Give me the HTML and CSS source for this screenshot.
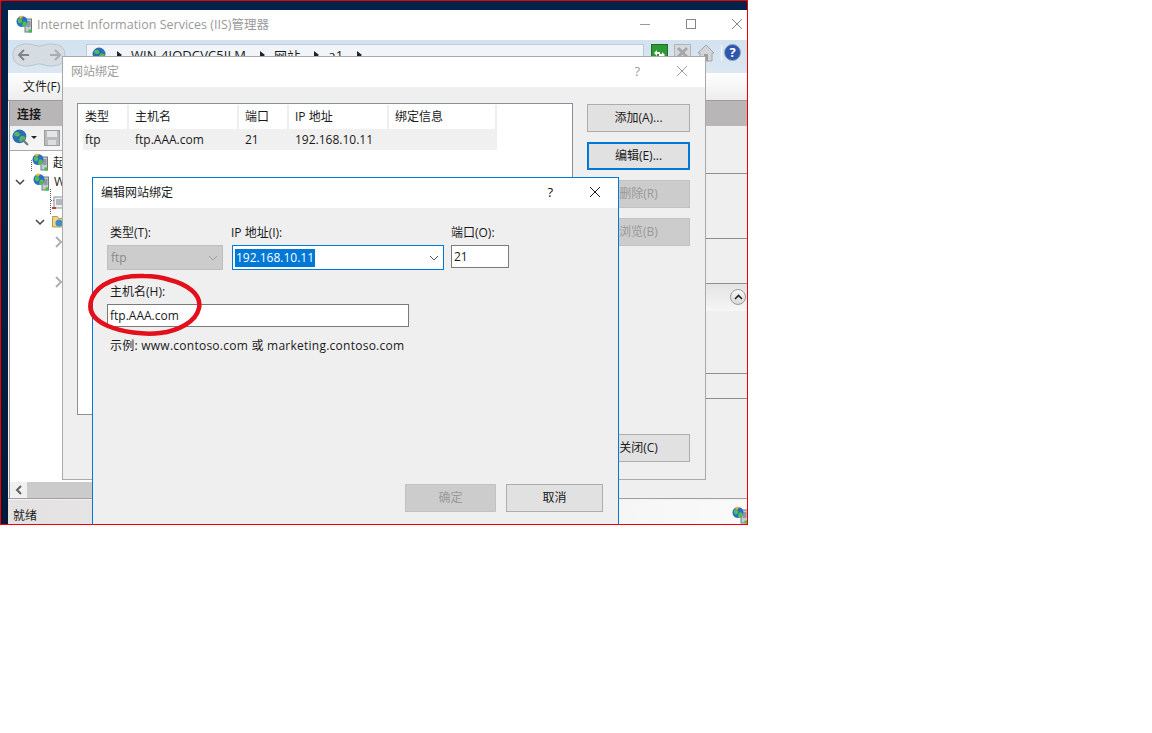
FILE: index.html
```html
<!DOCTYPE html>
<html lang="zh-CN">
<head>
    <meta charset="UTF-8">
    <meta name="viewport" content="width=device-width, initial-scale=1.0">
    <title>Internet Information Services (IIS)管理器</title>
    <link rel="stylesheet" href="styles.css">
</head>
<body>
    <svg class="defs" width="0" height="0" aria-hidden="true">
        <symbol id="server-globe" viewBox="0 0 16 18">
            <rect x="9" y="4" width="6.500" height="13" fill="#c4ccd2" stroke="#6f7a82" stroke-width="1"/>
            <path d="M10.500 7h4M10.500 9h4M10.500 11h4" stroke="#5c666e" stroke-width="1"/>
            <rect x="12.500" y="14.500" width="3" height="3" fill="#3fc43f"/>
            <circle cx="6" cy="6.500" r="5.500" fill="#2a6fc4"/>
            <path d="M2 4c2-1 3 0 4 1s0 2-1 3-2 0-3-1zM7 7c2-1 3 0 4 1-1 3-3 4-4 4s-1-3 0-5z" fill="#4fc04f"/>
            <path d="M2.500 2c1-1.200 3-1.800 5-1L5 4z" fill="#e8b53a"/>
        </symbol>
        <symbol id="globe" viewBox="0 0 16 16">
            <circle cx="7" cy="7" r="6.500" fill="#2a6fb4"/>
            <path d="M2 4c2-2 4-1 5 0s0 3-2 3-3-1-3-3zM8 7c2-1 4 0 5 1-1 3-3 4-5 4s-1-3 0-5z" fill="#58b858"/>
            <path d="M10 10l5 5" stroke="#6d7880" stroke-width="2"/>
        </symbol>
    </svg>

    <div class="screen">
        <div class="main-window">
            <div class="titlebar">
                <svg class="title-icon" width="16" height="18"><use href="#server-globe"/></svg>
                <span class="title-text">Internet Information Services (IIS)管理器</span>
                <div class="window-controls">
                    <svg width="12" height="12" viewBox="0 0 12 12"><path d="M1 6.500h10" stroke="#999"/></svg>
                    <svg width="12" height="12" viewBox="0 0 12 12"><rect x="1.500" y="1.500" width="9" height="9" fill="none" stroke="#888"/></svg>
                    <svg width="12" height="12" viewBox="0 0 12 12"><path d="M1 1l10 10M11 1L1 11" stroke="#888"/></svg>
                </div>
            </div>

            <div class="navbar">
                <svg class="nav-arrows" width="54" height="26" viewBox="0 0 54 26">
                    <path d="M1 13C1 5 7 2 15 2c6 0 8 2 12 2s6-2 12-2c8 0 14 3 14 11s-6 11-14 11c-6 0-8-2-12-2s-6 2-12 2C7 24 1 21 1 13z" fill="#d5dde2" stroke="#b9c5cc"/>
                    <path d="M17 13H8m4-5-5 5 5 5" fill="none" stroke="#80858a" stroke-width="2"/>
                    <path d="M38 13h9m-4-5 5 5-5 5" fill="none" stroke="#a7adb2" stroke-width="2"/>
                </svg>
                <div class="address">
                    <svg width="16" height="16"><use href="#globe"/></svg>
                    <span class="crumb-sep"></span>
                    <span class="crumb">WIN-4JQDCVC5JLM</span>
                    <span class="crumb-sep"></span>
                    <span class="crumb">网站</span>
                    <span class="crumb-sep"></span>
                    <span class="crumb">a1</span>
                    <span class="crumb-sep"></span>
                </div>
                <div class="nav-tools">
                    <svg width="17" height="17" viewBox="0 0 17 17">
                        <rect x=".5" y=".5" width="16" height="16" fill="#2f9a35" stroke="#1e6e24"/>
                        <path d="M3 9l3-3v2h3v2H6v2zM14 11l-3 3v-2H8v-2h3V8z" fill="#fff"/>
                    </svg>
                    <svg width="17" height="17" viewBox="0 0 17 17">
                        <rect x=".5" y=".5" width="16" height="16" fill="#d6d8da" stroke="#b2b5b8"/>
                        <path d="M4 4l9 9M13 4l-9 9" stroke="#a4a7aa" stroke-width="3"/>
                    </svg>
                    <svg width="18" height="18" viewBox="0 0 18 18">
                        <path d="M1 9l8-8 8 8h-2v8H3V9z" fill="#d3d5d6" stroke="#a3a6a8"/>
                        <rect x="7" y="10" width="4" height="7" fill="#9b9ea0"/>
                    </svg>
                    <span class="tool-sep"></span>
                    <svg width="17" height="17" viewBox="0 0 17 17">
                        <circle cx="8.500" cy="8.500" r="8" fill="#2f56ad" stroke="#8e9cb8"/>
                        <text x="8.500" y="13" text-anchor="middle" class="help-mark">?</text>
                    </svg>
                </div>
            </div>

            <div class="menubar"><span>文件(F)</span></div>

            <div class="workspace">
                <div class="conn-pane">
                    <div class="pane-head">连接</div>
                    <div class="conn-tools">
                        <svg width="17" height="17"><use href="#globe"/></svg>
                        <span class="caret"></span>
                        <svg class="save-icon" width="16" height="16" viewBox="0 0 16 16">
                            <rect x=".5" y=".5" width="15" height="15" fill="#b9bcbe" stroke="#9a9da0"/>
                            <rect x="3" y="1" width="10" height="6" fill="#e4e5e6"/>
                            <rect x="4" y="10" width="8" height="5" fill="#dcdddf"/>
                        </svg>
                    </div>
                    <div class="tree">
                        <svg class="tree-lines" width="70" height="140" viewBox="0 0 70 140">
                            <path d="M21.500 20V9.500H32M28 29.500h4M40.500 38v26M41 49.500h11M48 69.500h4M58.500 78v52" fill="none" stroke="#555" stroke-dasharray="1 1"/>
                        </svg>
                        <div class="tree-row level-0">
                            <svg width="16" height="18"><use href="#server-globe"/></svg>
                            <span>起始页</span>
                        </div>
                        <div class="tree-row level-0">
                            <svg class="chevron" width="10" height="10" viewBox="0 0 10 10"><path d="M1 3l4 4 4-4" fill="none" stroke="#444" stroke-width="1.500"/></svg>
                            <svg width="16" height="18"><use href="#server-globe"/></svg>
                            <span>WIN-4JQDCVC5JLM</span>
                        </div>
                        <div class="tree-row level-1">
                            <svg width="13" height="16" viewBox="0 0 13 16">
                                <rect x="2" y="3" width="10" height="11" fill="#eef0f2" stroke="#8a8f94"/>
                                <path d="M4 6h6M4 8h6M4 10h6" stroke="#7a7f84"/>
                                <path d="M0 13h4v2H0z" fill="#c23a3a"/>
                            </svg>
                        </div>
                        <div class="tree-row level-1">
                            <svg class="chevron" width="10" height="10" viewBox="0 0 10 10"><path d="M1 3l4 4 4-4" fill="none" stroke="#444" stroke-width="1.500"/></svg>
                            <svg width="13" height="13" viewBox="0 0 13 13">
                                <path d="M.5 12V1.500h5l1 2h6V12z" fill="#f0d48a" stroke="#bb9a50"/>
                                <circle cx="7" cy="8" r="3.500" fill="#3d8fc2"/>
                            </svg>
                        </div>
                        <div class="tree-row level-2">
                            <svg width="8" height="12" viewBox="0 0 8 12"><path d="M1 1l5 5-5 5" fill="none" stroke="#b0b0b0" stroke-width="2"/></svg>
                        </div>
                        <div class="tree-row level-2"></div>
                        <div class="tree-row level-2">
                            <svg width="8" height="12" viewBox="0 0 8 12"><path d="M1 1l5 5-5 5" fill="none" stroke="#b0b0b0" stroke-width="2"/></svg>
                        </div>
                    </div>
                    <div class="h-scroll">
                        <div class="scroll-btn">
                            <svg width="8" height="10" viewBox="0 0 8 10"><path d="M6 1L2 5l4 4" fill="none" stroke="#606060" stroke-width="2"/></svg>
                        </div>
                    </div>
                </div>

                <div class="action-pane">
                    <div class="pane-head"></div>
                    <div class="action-block block-a"></div>
                    <div class="action-block block-b"></div>
                    <div class="action-block block-c"></div>
                    <div class="action-head">
                        <span class="collapse-btn">
                            <svg width="9" height="6" viewBox="0 0 9 6"><path d="M1 5l3.500-3.500L8 5" fill="none" stroke="#222" stroke-width="1.600"/></svg>
                        </span>
                    </div>
                    <div class="action-block block-d"></div>
                    <div class="action-block block-e"></div>
                </div>
            </div>

            <div class="statusbar">
                <span>就绪</span>
                <svg width="16" height="18"><use href="#server-globe"/></svg>
            </div>
        </div>

        <!-- 网站绑定 -->
        <div class="dialog bindings-dialog">
            <div class="dialog-title muted">
                <span class="dialog-name">网站绑定</span>
                <span class="dialog-help">?</span>
                <svg width="12" height="12" viewBox="0 0 12 12"><path d="M1 1l10 10M11 1L1 11" stroke="currentColor"/></svg>
            </div>
            <div class="bindings-body">
                <div class="bindings-table">
                    <div class="table-head">
                        <span class="col-type">类型</span>
                        <span class="col-host">主机名</span>
                        <span class="col-port">端口</span>
                        <span class="col-ip">IP 地址</span>
                        <span class="col-info">绑定信息</span>
                    </div>
                    <div class="table-row">
                        <span class="col-type">ftp</span>
                        <span class="col-host">ftp.AAA.com</span>
                        <span class="col-port">21</span>
                        <span class="col-ip">192.168.10.11</span>
                        <span class="col-info"></span>
                    </div>
                </div>
                <div class="side-buttons">
                    <button class="btn">添加(A)...</button>
                    <button class="btn btn-focus">编辑(E)...</button>
                    <button class="btn btn-off">删除(R)</button>
                    <button class="btn btn-off">浏览(B)</button>
                    <button class="btn btn-close">关闭(C)</button>
                </div>
            </div>
        </div>

        <!-- 编辑网站绑定 -->
        <div class="dialog edit-dialog">
            <div class="dialog-title">
                <span class="dialog-name">编辑网站绑定</span>
                <span class="dialog-help">?</span>
                <svg width="12" height="12" viewBox="0 0 12 12"><path d="M1 1l10 10M11 1L1 11" stroke="currentColor"/></svg>
            </div>
            <div class="edit-body">
                <div class="field-row">
                    <div class="field field-type">
                        <label>类型(T):</label>
                        <div class="select select-off">
                            <span>ftp</span>
                            <svg width="10" height="6" viewBox="0 0 10 6"><path d="M1 1l4 4 4-4" fill="none" stroke="#a0a0a0"/></svg>
                        </div>
                    </div>
                    <div class="field field-ip">
                        <label>IP 地址(I):</label>
                        <div class="select select-on">
                            <span class="selected-text">192.168.10.11</span>
                            <svg width="10" height="6" viewBox="0 0 10 6"><path d="M1 1l4 4 4-4" fill="none" stroke="#555"/></svg>
                        </div>
                    </div>
                    <div class="field field-port">
                        <label>端口(O):</label>
                        <div class="textbox port-box">21</div>
                    </div>
                </div>
                <div class="field field-host">
                    <label>主机名(H):</label>
                    <div class="textbox host-box">ftp.AAA.com</div>
                </div>
                <p class="hint">示例: www.contoso.com 或 marketing.contoso.com</p>
                <div class="edit-actions">
                    <button class="btn btn-off btn-ok">确定</button>
                    <button class="btn btn-cancel">取消</button>
                </div>
            </div>
        </div>

        <svg class="red-circle" width="120" height="66" viewBox="0 0 120 66">
            <path d="M58 4C32 3 12 12 6 26c-5 13 2 22 16 28 14 6 36 9 52 7 18-2 36-11 39-25C116 22 100 12 84 8 75 5 66 4 58 4z" fill="none" stroke="#e3101c" stroke-width="4.500"/>
        </svg>
    </div>
</body>
</html>
```

FILE: styles.css
```css
* {
    box-sizing: border-box;
}
body {
    margin: 0;
    background-color: white;
    font-family: "Open Sans", "Noto Sans CJK SC", sans-serif;
    font-size: 12px;
    color: #1a1a1a;
}
.defs {
    position: absolute;
}
.screen {
    position: relative;
    width: 748px;
    height: 525px;
    border: 1px solid #f00000;
    overflow: hidden;
    background: linear-gradient(#04234a, #021a38);
    padding: 9px 0 0 7px;
}

/* main window */
.main-window {
    display: flex;
    flex-direction: column;
    height: 514px;
    background-color: #f2f2f2;
}
.titlebar {
    display: flex;
    align-items: center;
    height: 30px;
    padding: 0 0 2px 8px;
    background-color: white;
}
.title-icon {
    margin-right: 5px;
}
.title-text {
    color: #9a9a9a;
    font-size: 12.500px;
}
.window-controls {
    display: flex;
    gap: 34px;
    margin-left: auto;
    padding-right: 4px;
}
.navbar {
    display: flex;
    align-items: flex-start;
    height: 33px;
    padding: 2px 0 0 4px;
    background: linear-gradient(#d3e2f0, #dbe7f2);
}
.address {
    display: flex;
    align-items: center;
    gap: 5px;
    width: 558px;
    height: 23px;
    margin: 2px 0 0 20px;
    padding-left: 5px;
    background-color: #f1f5f9;
    border: 1px solid #bccada;
    font-size: 13px;
}
.crumb {
    margin-right: 5px;
    letter-spacing: .1px;
}
.crumb-sep {
    width: 0;
    height: 0;
    border-left: 5px solid #222;
    border-top: 4px solid transparent;
    border-bottom: 4px solid transparent;
    margin: 0 4px;
}
.nav-tools {
    display: flex;
    align-items: center;
    gap: 6px;
    margin: 2px 0 0 7px;
}
.tool-sep {
    width: 1px;
    height: 16px;
    margin-right: -4px;
    background-color: #f4f8fb;
}
.help-mark {
    fill: white;
    font-size: 13px;
    font-weight: bold;
}
.menubar {
    display: flex;
    align-items: center;
    height: 28px;
    padding-left: 15px;
    background: linear-gradient(#ffffff, #ededed);
    border-bottom: 1px solid #9c9c9c;
}
.workspace {
    display: flex;
    height: 400px;
    border-bottom: 1px solid #a0a0a0;
    padding-left: 1px;
}
.conn-pane {
    display: flex;
    flex-direction: column;
    width: 400px;
    border-left: 1px solid #9a9a9a;
    background-color: white;
}
.pane-head {
    height: 25px;
    padding: 4px 0 0 7px;
    background-color: #b9b6b8;
    font-weight: 600;
    flex-shrink: 0;
}
.conn-tools {
    display: flex;
    align-items: center;
    height: 25px;
    padding-left: 2px;
    background: linear-gradient(#f0f0f0, #f6f6f6);
    border-bottom: 1px solid #a8a8a8;
    flex-shrink: 0;
}
.caret {
    width: 0;
    height: 0;
    margin: 0 7px 0 2px;
    border-top: 3px solid #222;
    border-left: 3px solid transparent;
    border-right: 3px solid transparent;
}
.tree {
    position: relative;
    flex: 1;
    padding-top: 1px;
}
.tree-lines {
    position: absolute;
    left: 0;
    top: 0;
}
.tree-row {
    position: relative;
    display: flex;
    align-items: center;
    gap: 5px;
    height: 20px;
}
.level-0 {
    padding-left: 22px;
}
.level-0 .chevron {
    margin-left: -17px;
    margin-right: 3px;
}
.level-1 {
    padding-left: 42px;
}
.level-1 .chevron {
    margin-left: -17px;
    margin-right: 2px;
}
.level-2 {
    padding-left: 45px;
}
.h-scroll {
    height: 16px;
    background-color: #cbcbcb;
    flex-shrink: 0;
}
.scroll-btn {
    display: flex;
    align-items: center;
    justify-content: center;
    width: 17px;
    height: 16px;
    background-color: #f0f0f0;
}
.action-pane {
    flex: 1;
    display: flex;
    flex-direction: column;
    background-color: #efefef;
}
.action-block {
    border-bottom: 1px solid #8e8e8e;
}
.block-a {
    height: 48px;
}
.block-b {
    height: 65px;
}
.block-c {
    height: 45px;
}
.block-d {
    height: 63px;
}
.block-e {
    height: 25px;
}
.action-head {
    display: flex;
    align-items: center;
    justify-content: flex-end;
    height: 27px;
    padding-right: 1px;
    background: linear-gradient(#e4e4e4, #f6f6f6);
}
.collapse-btn {
    display: flex;
    align-items: center;
    justify-content: center;
    width: 16px;
    height: 16px;
    border: 1px solid #9a9a9a;
    border-radius: 50%;
    background: linear-gradient(#f8f8f8, #d8d8d8);
}
.statusbar {
    display: flex;
    align-items: center;
    justify-content: space-between;
    height: 24px;
    margin-top: 1px;
    padding: 6px 0 0 5px;
    background: linear-gradient(90deg, #e3e1e1, #fafafa);
    overflow: hidden;
}
.statusbar svg {
    margin-right: -1px;
}

/* dialogs, free floating over the main window */
.dialog {
    position: absolute;
    display: flex;
    flex-direction: column;
    background-color: #efefef;
}
.dialog-title {
    display: flex;
    align-items: center;
    height: 30px;
    padding: 0 17px 2px 8px;
    background-color: white;
}
.dialog-name {
    flex: 1;
}
.dialog-help {
    margin-right: 36px;
    font-size: 13px;
}
.muted {
    color: #9c9c9c;
}
.bindings-dialog {
    left: 61px;
    top: 55px;
    width: 644px;
    height: 424px;
    border: 1px solid #a9a9a9;
}
.bindings-body {
    display: flex;
    flex: 1;
    padding: 16px 15px 0 14px;
}
.bindings-table {
    width: 496px;
    height: 312px;
    padding: 1px;
    background-color: white;
    border: 1px solid #8c9096;
}
.table-head,
.table-row {
    display: flex;
    align-items: center;
}
.table-head {
    height: 24px;
}
.table-head span {
    height: 24px;
    line-height: 24px;
    border-right: 2px solid #eeeeee;
}
.table-row {
    height: 21px;
    margin-left: 4px;
    width: 414px;
    background-color: #f0f0f0;
}
.col-type {
    width: 50px;
    padding-left: 6px;
    flex-shrink: 0;
}
.table-row .col-type {
    width: 46px;
    padding-left: 2px;
}
.col-host {
    width: 110px;
    padding-left: 6px;
    flex-shrink: 0;
}
.col-port {
    width: 50px;
    padding-left: 6px;
    flex-shrink: 0;
}
.col-ip {
    width: 100px;
    padding-left: 6px;
    flex-shrink: 0;
}
.col-info {
    width: 108px;
    padding-left: 6px;
    flex-shrink: 0;
}
.side-buttons {
    display: flex;
    flex-direction: column;
    gap: 10px;
    width: 103px;
    margin: 1px 0 0 14px;
    height: 358px;
}
.btn {
    display: block;
    height: 28px;
    padding: 0 0 2px;
    background-color: #e1e1e1;
    border: 1px solid #adadad;
    border-radius: 0;
    font-family: inherit;
    font-size: 12px;
    color: #1a1a1a;
}
.btn-focus {
    border: 2px solid #0078d7;
}
.btn-off {
    background-color: #cccccc;
    border-color: #c2c2c2;
    color: #999999;
}
.btn-close {
    margin-top: auto;
}
.edit-dialog {
    left: 91px;
    top: 176px;
    width: 527px;
    height: 348px;
    border: 1px solid #0078d7;
    border-bottom: none;
}
.edit-dialog .dialog-help {
    color: #111;
}
.edit-body {
    display: flex;
    flex-direction: column;
    flex: 1;
    padding: 16px 15px 13px 14px;
}
.field-row {
    display: flex;
}
.field {
    display: flex;
    flex-direction: column;
}
.field label {
    height: 21px;
    line-height: 17px;
    padding-left: 3px;
}
.field-type {
    width: 116px;
}
.field-ip {
    width: 212px;
    margin-left: 9px;
}
.field-ip label {
    padding-left: 0;
    margin-left: -1px;
}
.field-port {
    width: 58px;
    margin-left: 7px;
}
.field-port label {
    padding-left: 0;
}
.select {
    display: flex;
    align-items: center;
    justify-content: space-between;
    height: 25px;
    padding: 0 4px 0 3px;
}
.select-off {
    background-color: #cccccc;
    border: 1px solid #bfbfbf;
    color: #8a8a8a;
}
.select-on {
    background-color: white;
    border: 1px solid #0078d7;
    padding-left: 2px;
}
.selected-text {
    padding: 0 1px;
    height: 18px;
    line-height: 18px;
    background-color: #0078d7;
    color: white;
}
.textbox {
    display: flex;
    align-items: center;
    height: 23px;
    padding-left: 2px;
    background-color: white;
    border: 1px solid #7a7a7a;
}
.field-host {
    margin-top: 13px;
    width: 302px;
}
.field-host label {
    height: 21px;
}
.hint {
    margin: 10px 0 0 3px;
    line-height: 17px;
    letter-spacing: .25px;
}
.edit-actions {
    display: flex;
    justify-content: flex-end;
    gap: 10px;
    margin-top: auto;
}
.btn-ok {
    width: 91px;
}
.btn-cancel {
    width: 97px;
}

/* hand drawn mark over the dialog */
.red-circle {
    position: absolute;
    left: 85px;
    top: 271px;
}
```
